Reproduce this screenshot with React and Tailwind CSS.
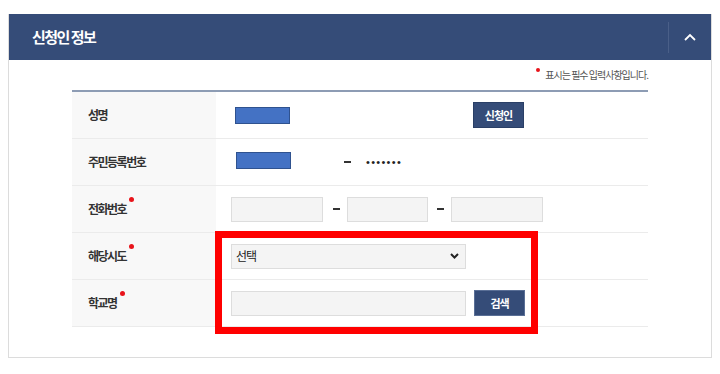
import React from "react";

const FONT = { fontFamily: '"Noto Sans CJK KR", "Noto Sans", sans-serif' };

function Dot() {
  return <span className="inline-block w-[5px] h-[5px] rounded-full bg-[#e8141b] ml-[3px] mb-[20px]" />;
}

function Row({ label, req, children }) {
  return (
    <div className="flex h-[47px] border-b border-[#ebebeb]">
      <div className="w-[144px] bg-[#f8f8f8] flex items-center pl-[16px]">
        <span className="text-[12px] font-bold text-[#333] tracking-[-1.5px]">{label}</span>
        {req && <Dot />}
      </div>
      <div className="flex-1 flex items-center">{children}</div>
    </div>
  );
}

function Dash({ ml }) {
  return <span className={`w-[7px] h-[2px] bg-[#333] ${ml}`} />;
}

export default function App() {
  return (
    <div className="relative w-[720px] h-[374px] bg-white pt-[14px] pl-[8px]" style={FONT}>
      <div className="w-[704px] h-[344px] border border-t-0 border-[#dcdcdc]">
        <div className="h-[46px] bg-[#354c78] flex items-center">
          <span className="ml-[23px] text-white font-bold text-[15px] tracking-[-1.5px]">신청인 정보</span>
          <div className="ml-auto w-px h-[31px] bg-[#4a5f88]" />
          <div className="w-[42px] flex items-center justify-center">
            <svg width="12" height="8" viewBox="0 0 12 8">
              <polyline points="1,7 6,2 11,7" fill="none" stroke="white" strokeWidth="1.8" />
            </svg>
          </div>
        </div>
        <div className="px-[63px]">
          <div className="h-[20px] mt-[4px] flex items-center justify-end">
            <span className="w-[4px] h-[4px] rounded-full bg-[#e8141b] mb-[8px] mr-[5px]" />
            <span className="text-[10px] text-[#555] tracking-[-1px]">표시는 필수 입력사항입니다.</span>
          </div>
          <div className="mt-[6px] border-t-2 border-[#8d9cb4]">
            <Row label="성명">
              <div className="ml-[19px] w-[55px] h-[17px] bg-[#4472c4] border border-[#2f528f]" />
              <button className="ml-[183px] w-[51px] h-[26px] bg-[#354c78] border border-[#2a3f66] text-white text-[11px] font-bold tracking-[-1px]">
                신청인
              </button>
            </Row>
            <Row label="주민등록번호">
              <div className="ml-[20px] mb-[3px] w-[55px] h-[17px] bg-[#4472c4] border border-[#2f528f]" />
              <Dash ml="ml-[53px]" />
              <span className="ml-[15px] text-[11px] text-[#222] tracking-[1.3px]" style={{ fontFamily: '"Liberation Sans", sans-serif' }}>
                •••••••
              </span>
            </Row>
            <Row label="전화번호" req>
              <div className="ml-[15px] w-[92px] h-[25px] bg-[#f4f4f4] border border-[#dddddd]" />
              <Dash ml="ml-[10px]" />
              <div className="ml-[7px] w-[81px] h-[25px] bg-[#f4f4f4] border border-[#dddddd]" />
              <Dash ml="ml-[9px]" />
              <div className="ml-[7px] w-[92px] h-[25px] bg-[#f4f4f4] border border-[#dddddd]" />
            </Row>
            <Row label="해당시도" req>
              <div className="ml-[15px] w-[235px] h-[25px] bg-[#f4f4f4] border border-[#dddddd] flex items-center justify-between pl-[4px] pr-[6px]">
                <span className="text-[12px] text-[#222] tracking-[-1px]">선택</span>
                <svg width="9" height="6" viewBox="0 0 9 6">
                  <polyline points="1,1 4.5,4.5 8,1" fill="none" stroke="#222" strokeWidth="2" />
                </svg>
              </div>
            </Row>
            <Row label="학교명" req>
              <div className="ml-[15px] w-[235px] h-[25px] bg-[#f4f4f4] border border-[#dddddd]" />
              <button className="ml-[8px] w-[51px] h-[26px] bg-[#354c78] border border-[#5a6f96] text-white text-[11px] font-bold tracking-[-1px]">
                검색
              </button>
            </Row>
          </div>
        </div>
      </div>
      <div className="absolute left-[215px] top-[231px] w-[323px] h-[103px] border-[7px] border-[#ff0000]" />
    </div>
  );
}
